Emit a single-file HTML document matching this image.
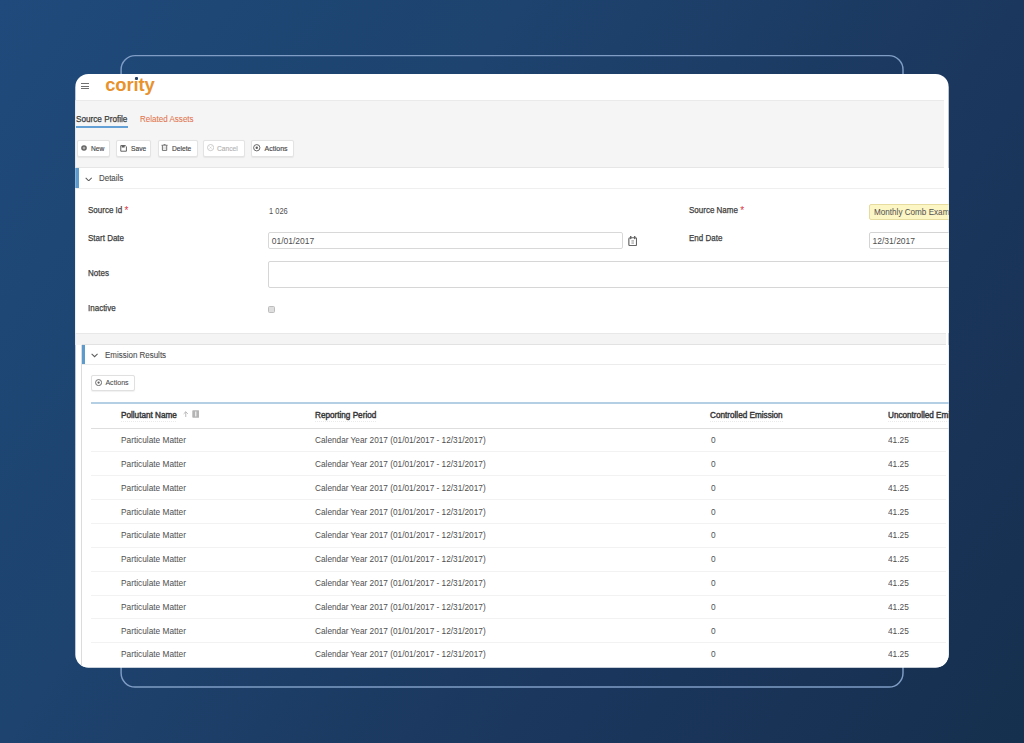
<!DOCTYPE html>
<html><head><meta charset="utf-8"><style>
*{margin:0;padding:0;box-sizing:border-box}
html,body{width:1024px;height:743px;overflow:hidden}
body{position:relative;font-family:"Liberation Sans",sans-serif;background:linear-gradient(125deg,#1f4a7b 0%,#1d436e 34%,#1b375e 66%,#152f4e 100%)}
.a{position:absolute}
.t{position:absolute;white-space:nowrap;line-height:1;transform-origin:0 0}
.m{-webkit-text-stroke:0.25px currentColor}
#card{position:absolute;left:0;top:0;width:1024px;height:743px;clip-path:inset(74px 75.3px 75.5px 75.3px round 13px)}
</style></head><body>
<svg class="a" style="left:0;top:0;width:1024px;height:743px" viewBox="0 0 1024 743"><rect x="121.1" y="55.6" width="781.9" height="631.4" rx="14" fill="none" stroke="#7f9dc5" stroke-width="1.45"/></svg>
<div id="card">
<div class="a" style="left:75px;top:74px;width:874.00px;height:594.00px;background:#fff;"></div>
<div class="a" style="left:75px;top:100px;width:869.30px;height:1.00px;background:#eaeaea;"></div>
<div class="a" style="left:81px;top:83px;width:8.00px;height:1.10px;background:#707070;"></div>
<div class="a" style="left:81px;top:85.6px;width:8.00px;height:1.10px;background:#707070;"></div>
<div class="a" style="left:81px;top:88.2px;width:8.00px;height:1.10px;background:#707070;"></div>
<div class="t" style="left:105.20px;top:75.52px;font-size:18.4px;color:#e8922e;font-weight:bold;letter-spacing:-0.1px;">cority</div>
<div class="a" style="left:134.9px;top:76.6px;width:3.20px;height:3.00px;background:#243f6c;border-radius:1px;box-shadow:0 0 0 0.6px #fff;"></div>
<div class="a" style="left:75px;top:101px;width:869.30px;height:66.50px;background:#f5f5f5;"></div>
<div class="t m" style="left:76.30px;top:115.15px;font-size:8.8px;color:#3a3a3a;transform:scaleX(0.93);">Source Profile</div>
<div class="a" style="left:76px;top:126.2px;width:52.00px;height:1.70px;background:#63a0d6;"></div>
<div class="t" style="left:140.20px;top:115.32px;font-size:8.6px;color:#e27550;transform:scaleX(0.935);-webkit-text-stroke:0.08px currentColor;">Related Assets</div>
<div class="a" style="left:77px;top:139.6px;width:33.00px;height:17.00px;background:#fff;border:1px solid #e3e3e3;border-radius:2px;box-shadow:0 0.5px 1px rgba(0,0,0,0.06);"></div>
<div class="t m" style="left:90.80px;top:145.27px;font-size:7.0px;color:#474747;transform:scaleX(0.95);-webkit-text-stroke:0.15px currentColor;">New</div>
<div class="a" style="left:116.2px;top:139.6px;width:35.20px;height:17.00px;background:#fff;border:1px solid #e3e3e3;border-radius:2px;box-shadow:0 0.5px 1px rgba(0,0,0,0.06);"></div>
<div class="t m" style="left:130.70px;top:145.27px;font-size:7.0px;color:#474747;transform:scaleX(0.95);-webkit-text-stroke:0.15px currentColor;">Save</div>
<div class="a" style="left:157.8px;top:139.6px;width:39.80px;height:17.00px;background:#fff;border:1px solid #e3e3e3;border-radius:2px;box-shadow:0 0.5px 1px rgba(0,0,0,0.06);"></div>
<div class="t m" style="left:171.50px;top:145.27px;font-size:7.0px;color:#474747;transform:scaleX(0.95);-webkit-text-stroke:0.15px currentColor;">Delete</div>
<div class="a" style="left:202.7px;top:139.6px;width:41.90px;height:17.00px;background:#fff;border:1px solid #e3e3e3;border-radius:2px;box-shadow:0 0.5px 1px rgba(0,0,0,0.06);"></div>
<div class="t m" style="left:216.50px;top:145.27px;font-size:7.0px;color:#b4b4b4;transform:scaleX(0.95);-webkit-text-stroke:0.15px currentColor;">Cancel</div>
<div class="a" style="left:250.5px;top:139.6px;width:43.70px;height:17.00px;background:#fff;border:1px solid #e3e3e3;border-radius:2px;box-shadow:0 0.5px 1px rgba(0,0,0,0.06);"></div>
<div class="t m" style="left:264.60px;top:145.27px;font-size:7.0px;color:#474747;-webkit-text-stroke:0.15px currentColor;">Actions</div>
<div class="a" style="left:75px;top:167.5px;width:874.00px;height:165.50px;background:#fff;"></div>
<div class="a" style="left:75px;top:167px;width:869.30px;height:1.00px;background:#e6e6e6;"></div>
<div class="a" style="left:75px;top:188px;width:871.00px;height:1.00px;background:#efefef;"></div>
<div class="a" style="left:75px;top:168.3px;width:4.40px;height:20.10px;background:#5d9bcd;"></div>
<div class="t" style="left:98.90px;top:174.56px;font-size:8.2px;color:#4d4d4d;transform:scaleX(0.97);-webkit-text-stroke:0.1px currentColor;">Details</div>
<div class="t m" style="left:88.00px;top:205.55px;font-size:8.8px;color:#3d3d3d;transform:scaleX(0.91);">Source Id</div>
<div class="t" style="left:124.60px;top:206.33px;font-size:10px;color:#d9363e;">*</div>
<div class="t" style="left:268.70px;top:207.37px;font-size:8.3px;color:#505050;transform:scaleX(0.9);">1 026</div>
<div class="t m" style="left:688.70px;top:205.55px;font-size:8.8px;color:#3d3d3d;transform:scaleX(0.91);">Source Name</div>
<div class="t" style="left:740.30px;top:206.33px;font-size:10px;color:#d9363e;">*</div>
<div class="a" style="left:868.7px;top:203.7px;width:91.30px;height:16.70px;background:#fcf5c4;border:1px solid #e7dca0;border-radius:2px;"></div>
<div class="t" style="left:874.00px;top:208.09px;font-size:8.4px;color:#505050;transform:scaleX(0.97);">Monthly Comb Exam</div>
<div class="t m" style="left:88.00px;top:234.15px;font-size:8.8px;color:#3d3d3d;transform:scaleX(0.91);">Start Date</div>
<div class="a" style="left:268.4px;top:232.3px;width:354.20px;height:17.00px;background:#fff;border:1px solid #d8d8d8;border-radius:2px;"></div>
<div class="t" style="left:271.70px;top:237.10px;font-size:8.5px;color:#505050;">01/01/2017</div>
<div class="t m" style="left:688.70px;top:234.15px;font-size:8.8px;color:#3d3d3d;transform:scaleX(0.91);">End Date</div>
<div class="a" style="left:868.7px;top:232px;width:91.30px;height:17.40px;background:#fff;border:1px solid #d4d4d4;border-radius:2px;"></div>
<div class="t" style="left:872.50px;top:237.10px;font-size:8.5px;color:#505050;">12/31/2017</div>
<div class="t m" style="left:88.00px;top:269.35px;font-size:8.8px;color:#3d3d3d;transform:scaleX(0.91);">Notes</div>
<div class="a" style="left:268.4px;top:261px;width:691.60px;height:26.60px;background:#fff;border:1px solid #d6d6d6;border-radius:2px;"></div>
<div class="t m" style="left:88.00px;top:304.15px;font-size:8.8px;color:#3d3d3d;transform:scaleX(0.91);">Inactive</div>
<div class="a" style="left:267.8px;top:305.5px;width:7.00px;height:7.10px;background:#dedede;border:1px solid #bdbdbd;border-radius:1.5px;"></div>
<div class="a" style="left:75px;top:333px;width:871.30px;height:11.50px;background:#f4f4f4;"></div>
<div class="a" style="left:75px;top:332.5px;width:871.30px;height:1.00px;background:#e8e8e8;"></div>
<div class="a" style="left:81.5px;top:344.5px;width:867.50px;height:323.50px;background:#fff;"></div>
<div class="a" style="left:81.5px;top:344px;width:864.80px;height:1.00px;background:#e2e2e2;"></div>
<div class="a" style="left:81.2px;top:345px;width:1.00px;height:323.00px;background:#dcdcdc;"></div>
<div class="a" style="left:81.8px;top:344.8px;width:3.40px;height:19.60px;background:#5d9bcd;"></div>
<div class="a" style="left:82px;top:364.3px;width:864.30px;height:1.00px;background:#ececec;"></div>
<div class="t" style="left:104.80px;top:350.77px;font-size:8.3px;color:#4d4d4d;transform:scaleX(0.96);-webkit-text-stroke:0.1px currentColor;">Emission Results</div>
<div class="a" style="left:91.4px;top:374.5px;width:43.60px;height:16.70px;background:#fff;border:1px solid #e0e0e0;border-radius:2px;box-shadow:0 0.5px 1px rgba(0,0,0,0.06);"></div>
<div class="t m" style="left:105.40px;top:380.09px;font-size:7.1px;color:#474747;-webkit-text-stroke:0.05px currentColor;">Actions</div>
<div class="a" style="left:91px;top:402.3px;width:858.00px;height:1.80px;background:#b4cfe4;"></div>
<div class="t m" style="left:121.00px;top:411.24px;font-size:8.7px;color:#363636;transform:scaleX(0.94);-webkit-text-stroke:0.42px currentColor;">Pollutant Name</div>
<div class="t m" style="left:315.00px;top:411.24px;font-size:8.7px;color:#363636;transform:scaleX(0.94);-webkit-text-stroke:0.42px currentColor;">Reporting Period</div>
<div class="t m" style="left:710.30px;top:411.24px;font-size:8.7px;color:#363636;transform:scaleX(0.94);-webkit-text-stroke:0.42px currentColor;">Controlled Emission</div>
<div class="t m" style="left:888.00px;top:411.24px;font-size:8.7px;color:#363636;transform:scaleX(0.94);-webkit-text-stroke:0.42px currentColor;">Uncontrolled Emissions</div>
<div class="a" style="left:91px;top:427.5px;width:858.00px;height:1.00px;background:#dedede;"></div>
<div class="t" style="left:121.00px;top:436.12px;font-size:8.6px;color:#4f4f4f;transform:scaleX(0.965);">Particulate Matter</div>
<div class="t" style="left:315.00px;top:436.12px;font-size:8.6px;color:#4f4f4f;transform:scaleX(0.96);">Calendar Year 2017 (01/01/2017 - 12/31/2017)</div>
<div class="t" style="left:710.50px;top:436.12px;font-size:8.6px;color:#4f4f4f;transform:scaleX(0.965);">0</div>
<div class="t" style="left:888.00px;top:436.12px;font-size:8.6px;color:#4f4f4f;transform:scaleX(0.965);">41.25</div>
<div class="a" style="left:91px;top:451.4px;width:855.00px;height:1.00px;background:#f2f2f2;"></div>
<div class="t" style="left:121.00px;top:459.92px;font-size:8.6px;color:#4f4f4f;transform:scaleX(0.965);">Particulate Matter</div>
<div class="t" style="left:315.00px;top:459.92px;font-size:8.6px;color:#4f4f4f;transform:scaleX(0.96);">Calendar Year 2017 (01/01/2017 - 12/31/2017)</div>
<div class="t" style="left:710.50px;top:459.92px;font-size:8.6px;color:#4f4f4f;transform:scaleX(0.965);">0</div>
<div class="t" style="left:888.00px;top:459.92px;font-size:8.6px;color:#4f4f4f;transform:scaleX(0.965);">41.25</div>
<div class="a" style="left:91px;top:475.26px;width:855.00px;height:1.00px;background:#f2f2f2;"></div>
<div class="t" style="left:121.00px;top:483.72px;font-size:8.6px;color:#4f4f4f;transform:scaleX(0.965);">Particulate Matter</div>
<div class="t" style="left:315.00px;top:483.72px;font-size:8.6px;color:#4f4f4f;transform:scaleX(0.96);">Calendar Year 2017 (01/01/2017 - 12/31/2017)</div>
<div class="t" style="left:710.50px;top:483.72px;font-size:8.6px;color:#4f4f4f;transform:scaleX(0.965);">0</div>
<div class="t" style="left:888.00px;top:483.72px;font-size:8.6px;color:#4f4f4f;transform:scaleX(0.965);">41.25</div>
<div class="a" style="left:91px;top:499.12px;width:855.00px;height:1.00px;background:#f2f2f2;"></div>
<div class="t" style="left:121.00px;top:507.52px;font-size:8.6px;color:#4f4f4f;transform:scaleX(0.965);">Particulate Matter</div>
<div class="t" style="left:315.00px;top:507.52px;font-size:8.6px;color:#4f4f4f;transform:scaleX(0.96);">Calendar Year 2017 (01/01/2017 - 12/31/2017)</div>
<div class="t" style="left:710.50px;top:507.52px;font-size:8.6px;color:#4f4f4f;transform:scaleX(0.965);">0</div>
<div class="t" style="left:888.00px;top:507.52px;font-size:8.6px;color:#4f4f4f;transform:scaleX(0.965);">41.25</div>
<div class="a" style="left:91px;top:522.98px;width:855.00px;height:1.00px;background:#f2f2f2;"></div>
<div class="t" style="left:121.00px;top:531.32px;font-size:8.6px;color:#4f4f4f;transform:scaleX(0.965);">Particulate Matter</div>
<div class="t" style="left:315.00px;top:531.32px;font-size:8.6px;color:#4f4f4f;transform:scaleX(0.96);">Calendar Year 2017 (01/01/2017 - 12/31/2017)</div>
<div class="t" style="left:710.50px;top:531.32px;font-size:8.6px;color:#4f4f4f;transform:scaleX(0.965);">0</div>
<div class="t" style="left:888.00px;top:531.32px;font-size:8.6px;color:#4f4f4f;transform:scaleX(0.965);">41.25</div>
<div class="a" style="left:91px;top:546.8399999999999px;width:855.00px;height:1.00px;background:#f2f2f2;"></div>
<div class="t" style="left:121.00px;top:555.12px;font-size:8.6px;color:#4f4f4f;transform:scaleX(0.965);">Particulate Matter</div>
<div class="t" style="left:315.00px;top:555.12px;font-size:8.6px;color:#4f4f4f;transform:scaleX(0.96);">Calendar Year 2017 (01/01/2017 - 12/31/2017)</div>
<div class="t" style="left:710.50px;top:555.12px;font-size:8.6px;color:#4f4f4f;transform:scaleX(0.965);">0</div>
<div class="t" style="left:888.00px;top:555.12px;font-size:8.6px;color:#4f4f4f;transform:scaleX(0.965);">41.25</div>
<div class="a" style="left:91px;top:570.6999999999999px;width:855.00px;height:1.00px;background:#f2f2f2;"></div>
<div class="t" style="left:121.00px;top:578.92px;font-size:8.6px;color:#4f4f4f;transform:scaleX(0.965);">Particulate Matter</div>
<div class="t" style="left:315.00px;top:578.92px;font-size:8.6px;color:#4f4f4f;transform:scaleX(0.96);">Calendar Year 2017 (01/01/2017 - 12/31/2017)</div>
<div class="t" style="left:710.50px;top:578.92px;font-size:8.6px;color:#4f4f4f;transform:scaleX(0.965);">0</div>
<div class="t" style="left:888.00px;top:578.92px;font-size:8.6px;color:#4f4f4f;transform:scaleX(0.965);">41.25</div>
<div class="a" style="left:91px;top:594.56px;width:855.00px;height:1.00px;background:#f2f2f2;"></div>
<div class="t" style="left:121.00px;top:602.72px;font-size:8.6px;color:#4f4f4f;transform:scaleX(0.965);">Particulate Matter</div>
<div class="t" style="left:315.00px;top:602.72px;font-size:8.6px;color:#4f4f4f;transform:scaleX(0.96);">Calendar Year 2017 (01/01/2017 - 12/31/2017)</div>
<div class="t" style="left:710.50px;top:602.72px;font-size:8.6px;color:#4f4f4f;transform:scaleX(0.965);">0</div>
<div class="t" style="left:888.00px;top:602.72px;font-size:8.6px;color:#4f4f4f;transform:scaleX(0.965);">41.25</div>
<div class="a" style="left:91px;top:618.42px;width:855.00px;height:1.00px;background:#f2f2f2;"></div>
<div class="t" style="left:121.00px;top:626.52px;font-size:8.6px;color:#4f4f4f;transform:scaleX(0.965);">Particulate Matter</div>
<div class="t" style="left:315.00px;top:626.52px;font-size:8.6px;color:#4f4f4f;transform:scaleX(0.96);">Calendar Year 2017 (01/01/2017 - 12/31/2017)</div>
<div class="t" style="left:710.50px;top:626.52px;font-size:8.6px;color:#4f4f4f;transform:scaleX(0.965);">0</div>
<div class="t" style="left:888.00px;top:626.52px;font-size:8.6px;color:#4f4f4f;transform:scaleX(0.965);">41.25</div>
<div class="a" style="left:91px;top:642.28px;width:855.00px;height:1.00px;background:#f2f2f2;"></div>
<div class="t" style="left:121.00px;top:650.32px;font-size:8.6px;color:#4f4f4f;transform:scaleX(0.965);">Particulate Matter</div>
<div class="t" style="left:315.00px;top:650.32px;font-size:8.6px;color:#4f4f4f;transform:scaleX(0.96);">Calendar Year 2017 (01/01/2017 - 12/31/2017)</div>
<div class="t" style="left:710.50px;top:650.32px;font-size:8.6px;color:#4f4f4f;transform:scaleX(0.965);">0</div>
<div class="t" style="left:888.00px;top:650.32px;font-size:8.6px;color:#4f4f4f;transform:scaleX(0.965);">41.25</div>
<svg class="a" style="left:80.8px;top:145.2px;width:6.0px;height:6.0px" viewBox="0 0 12 12"><circle cx="6" cy="6" r="5.6" fill="#626262"/><path d="M6 3.2v5.6M3.2 6h5.6" stroke="#d8d8d8" stroke-width="1.6"/></svg>
<svg class="a" style="left:120.1px;top:145px;width:7.200000000000003px;height:6.800000000000011px" viewBox="0 0 14 14"><path d="M1.2 1.2h9.3l2.3 2.3v9.3H1.2z" fill="none" stroke="#5e5e5e" stroke-width="2" stroke-linejoin="round"/><rect x="3.2" y="1.2" width="6" height="4" fill="#5e5e5e"/></svg>
<svg class="a" style="left:160.8px;top:144.2px;width:7.099999999999994px;height:6.900000000000006px" viewBox="0 0 14 14"><path d="M0.8 2.6h12.4M5 1h4" stroke="#5e5e5e" stroke-width="1.5" fill="none"/><path d="M2.6 2.6v10.4h8.8V2.6" fill="none" stroke="#5e5e5e" stroke-width="1.8"/><path d="M5.6 5v5.5M8.4 5v5.5" stroke="#a8a8a8" stroke-width="1"/></svg>
<svg class="a" style="left:206.6px;top:144.4px;width:7.200000000000017px;height:7.199999999999989px" viewBox="0 0 14 14"><circle cx="7" cy="7" r="6" fill="none" stroke="#bdbdbd" stroke-width="1.5"/><path d="M5 5l4 4M9 5l-4 4" stroke="#c4c4c4" stroke-width="1.1"/></svg>
<svg class="a" style="left:253.4px;top:144.1px;width:7.499999999999972px;height:7.5px" viewBox="0 0 14 14"><circle cx="7" cy="7" r="5.9" fill="none" stroke="#5a5a5a" stroke-width="1.7"/><circle cx="7" cy="7" r="2.2" fill="#5a5a5a"/></svg>
<svg class="a" style="left:85px;top:176.5px;width:7.400000000000006px;height:4.699999999999989px" viewBox="0 0 14 9"><path d="M1.2 1.5L7 7.3l5.8-5.8" fill="none" stroke="#5c5c5c" stroke-width="2"/></svg>
<svg class="a" style="left:91.2px;top:353.3px;width:7.200000000000003px;height:4.599999999999966px" viewBox="0 0 14 9"><path d="M1.2 1.5L7 7.3l5.8-5.8" fill="none" stroke="#5c5c5c" stroke-width="2"/></svg>
<svg class="a" style="left:94.7px;top:378.9px;width:7.200000000000003px;height:7.2000000000000455px" viewBox="0 0 14 14"><circle cx="7" cy="7" r="5.9" fill="none" stroke="#5a5a5a" stroke-width="1.7"/><circle cx="7" cy="7" r="2.2" fill="#5a5a5a"/></svg>
<svg class="a" style="left:627.6px;top:235.8px;width:9.399999999999977px;height:10.399999999999977px" viewBox="0 0 18 20"><rect x="1.6" y="3.4" width="14.8" height="15" rx="2.2" fill="none" stroke="#666" stroke-width="2.3"/><path d="M5.2 0.8v4M12.8 0.8v4" stroke="#666" stroke-width="2.8" stroke-linecap="round"/><path d="M6.5 9h5M6.5 11.5h5M6.5 14h5" stroke="#8a8a8a" stroke-width="1.3"/></svg>
<svg class="a" style="left:182.8px;top:410.6px;width:5.5px;height:6.599999999999966px" viewBox="0 0 10 12"><path d="M5 11.5V1.5M1.2 5.2L5 1.4l3.8 3.8" fill="none" stroke="#b2b2b2" stroke-width="1.6"/></svg>
<svg class="a" style="left:191.9px;top:409.9px;width:7.5px;height:7.900000000000034px" viewBox="0 0 15 16"><rect x="0.5" y="0.5" width="14" height="15" rx="1.5" fill="#b4b4b4"/><rect x="6.3" y="3" width="2.4" height="10" fill="#f4f4f4"/></svg>
<div class="a" style="left:121px;top:420.8px;width:56.30px;height:0.80px;background-image:linear-gradient(90deg,#dcdcdc 50%,transparent 50%);background-size:2px 1px;opacity:0.6;"></div>
<div class="a" style="left:315px;top:420.8px;width:61.60px;height:0.80px;background-image:linear-gradient(90deg,#dcdcdc 50%,transparent 50%);background-size:2px 1px;opacity:0.6;"></div>
<div class="a" style="left:710.3px;top:420.8px;width:73.70px;height:0.80px;background-image:linear-gradient(90deg,#dcdcdc 50%,transparent 50%);background-size:2px 1px;opacity:0.6;"></div>
<div class="a" style="left:888px;top:420.8px;width:61.00px;height:0.80px;background-image:linear-gradient(90deg,#dcdcdc 50%,transparent 50%);background-size:2px 1px;opacity:0.6;"></div>
</div>
</body></html>
